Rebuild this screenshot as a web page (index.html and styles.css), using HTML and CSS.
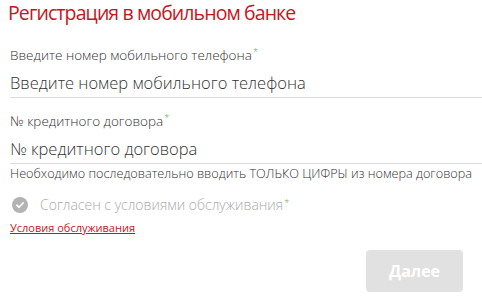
FILE: index.html
```html
<!DOCTYPE html>
<html lang="ru">
<head>
<meta charset="utf-8">
<link rel="stylesheet" href="styles.css">
</head>
<body>
<div class="page">
  <h1 class="title">Регистрация в мобильном банке</h1>
  <div class="field first">
    <div class="label">Введите номер мобильного телефона<span class="req">*</span></div>
    <div class="input">Введите номер мобильного телефона</div>
  </div>
  <div class="field">
    <div class="label">№ кредитного договора<span class="req">*</span></div>
    <div class="input">№ кредитного договора</div>
    <div class="hint">Необходимо последовательно вводить ТОЛЬКО ЦИФРЫ из номера договора</div>
  </div>
  <div class="agree">
    <span class="check"><svg width="16" height="16" viewBox="0 0 16 16"><circle cx="8" cy="8" r="8" fill="#b3b3b3"/><path d="M4.8 8.2 L7 10.3 L11.2 5.9" fill="none" stroke="#fff" stroke-width="1.6" stroke-linecap="round" stroke-linejoin="round"/></svg></span>
    <span class="agree-text">Согласен с условиями обслуживания<span class="req">*</span></span>
  </div>
  <a class="terms" href="#">Условия обслуживания</a>
  <div class="actions">
    <button class="next">Далее</button>
  </div>
</div>
</body>
</html>
```
FILE: styles.css
```css
* { box-sizing: border-box; }
html, body { margin: 0; padding: 0; background: #fff; }
body { font-family: "Open Sans", "Noto Sans", sans-serif; color: #333; }
.page { padding: 0 0 0 10px; width: 482px; }
.title {
  margin: 0 0 0 -2px;
  padding-top: 1px;
  font-size: 19.5px;
  font-weight: 400;
  letter-spacing: -0.9px;
  color: #c4161c;
  line-height: 23px;
}
.field.first { margin-top: 22px; }
.field + .field { margin-top: 14px; }
.label {
  font-size: 13.5px;
  font-weight: 300;
  color: #333;
  line-height: 18px;
}
.req { color: #4caf50; font-size: 9px; vertical-align: top; position: relative; top: -3px; margin-left: 1px; }
.input {
  margin-top: 8px;
  font-size: 16.5px;
  font-weight: 300;
  color: #333;
  line-height: 22px;
  padding-bottom: 3px;
  border-bottom: 1px solid #dcdcdc;
}
.hint {
  margin-top: 1px;
  font-size: 12.7px;
  font-weight: 300;
  color: #333;
  line-height: 16px;
}
.agree {
  margin-top: 14px;
  display: flex;
  align-items: center;
  gap: 12px;
  padding-left: 2px;
}
.check { display: flex; width: 16px; height: 16px; }
.agree-text { font-size: 14px; color: #aaa; line-height: 20px; font-weight: 300; }
.agree-text .req { top: -2px; }
.terms {
  display: inline-block;
  margin-top: -4px;
  font-size: 11px;
  color: #c4161c;
  line-height: 14px;
}
.actions { display: flex; justify-content: flex-end; padding-right: 19px; margin-top: 13px; }
.next {
  width: 97px;
  height: 42px;
  border: 0;
  border-radius: 4px;
  background: #e1e1e1;
  color: #fff;
  font-family: "Open Sans", sans-serif;
  font-size: 16px;
  font-weight: 700;
}
```
